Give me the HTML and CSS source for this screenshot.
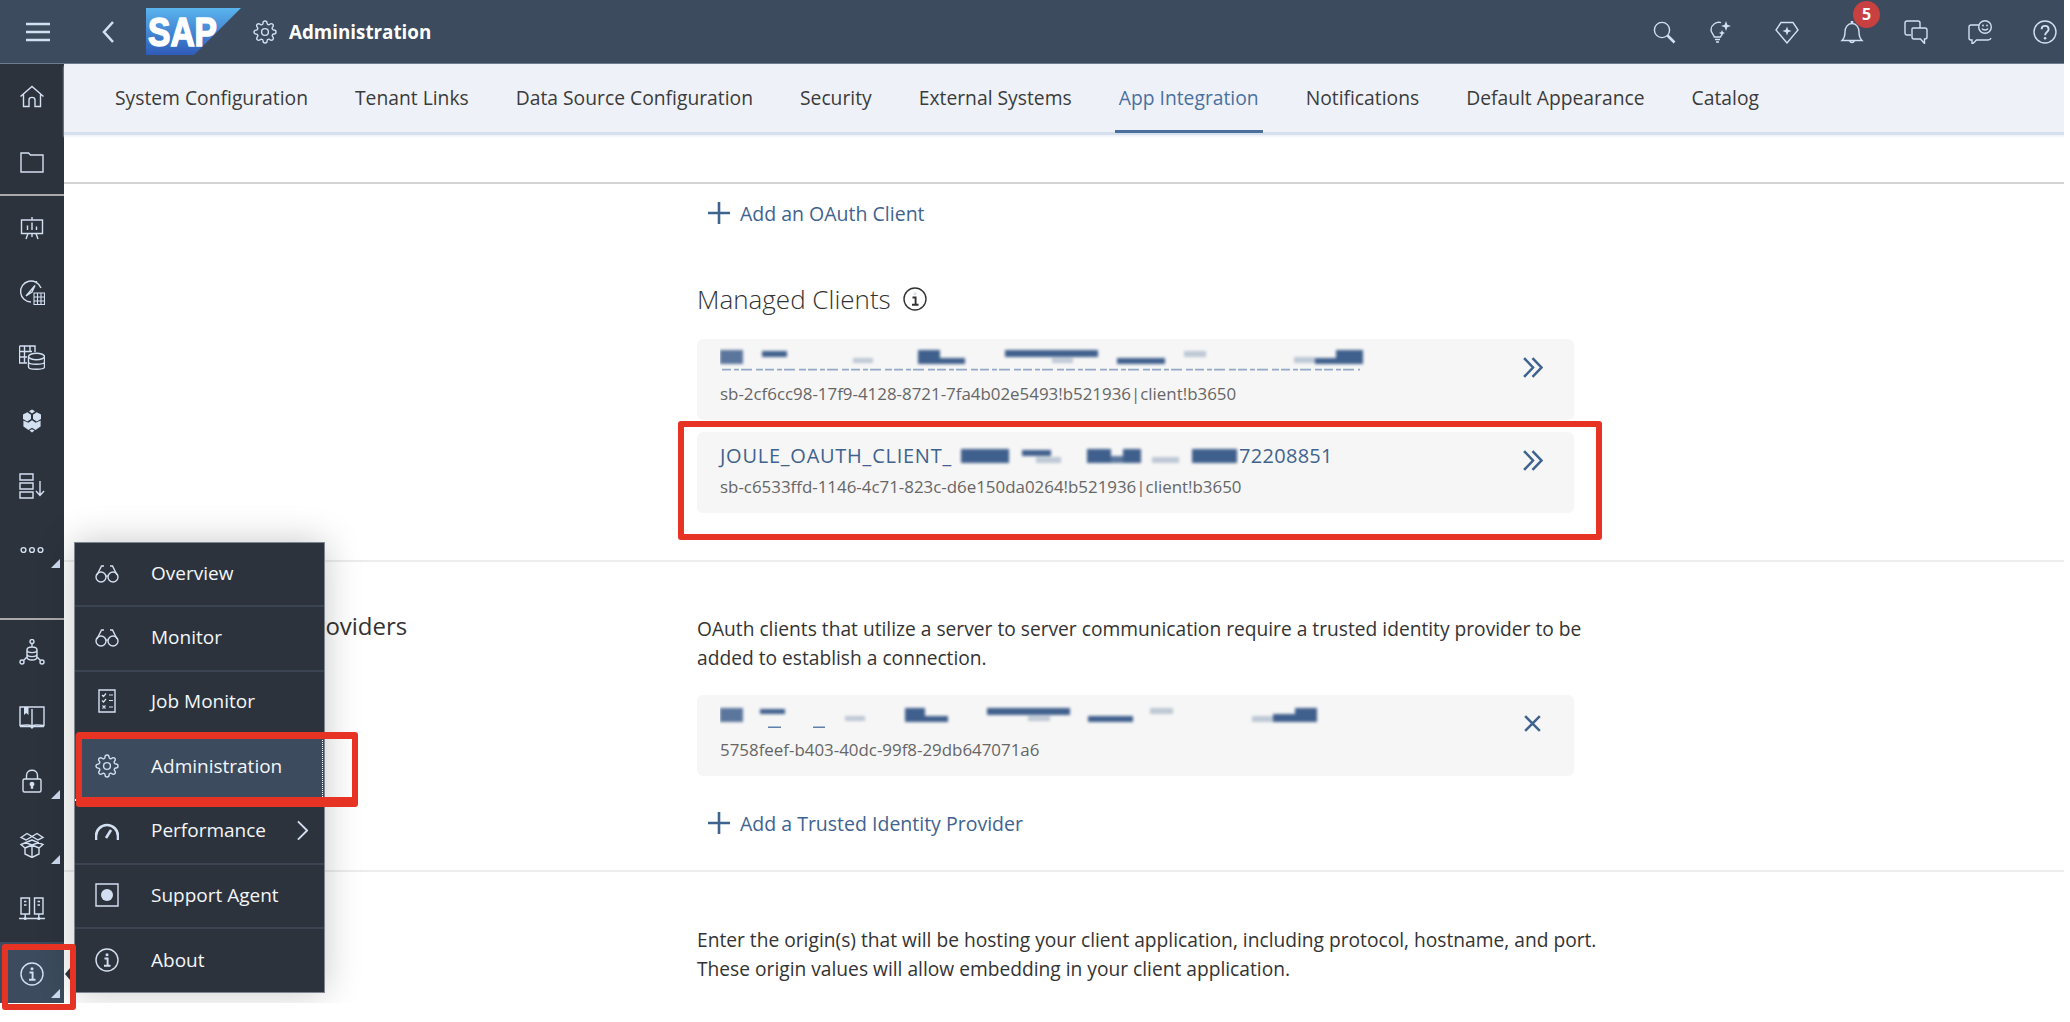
FILE: index.html
```html
<!DOCTYPE html>
<html lang="en">
<head>
    <meta charset="UTF-8">
    <title>Administration</title>
    <link rel="stylesheet" href="styles.css">
</head>
<body>
    <svg class="icon-defs" aria-hidden="true">
        <symbol id="i-gear" viewBox="0 0 24 24">
            <circle cx="12" cy="12" r="3.4"/>
            <path d="M19.4 15a1.65 1.65 0 0 0 .33 1.82l.06.06a2 2 0 0 1 0 2.83 2 2 0 0 1-2.83 0l-.06-.06a1.65 1.65 0 0 0-1.82-.33 1.65 1.65 0 0 0-1 1.51V21a2 2 0 0 1-2 2 2 2 0 0 1-2-2v-.09A1.65 1.65 0 0 0 9 19.4a1.65 1.65 0 0 0-1.82.33l-.06.06a2 2 0 0 1-2.83 0 2 2 0 0 1 0-2.83l.06-.06a1.65 1.65 0 0 0 .33-1.82 1.65 1.65 0 0 0-1.51-1H3a2 2 0 0 1-2-2 2 2 0 0 1 2-2h.09A1.65 1.65 0 0 0 4.6 9a1.65 1.65 0 0 0-.33-1.82l-.06-.06a2 2 0 0 1 0-2.83 2 2 0 0 1 2.83 0l.06.06a1.65 1.65 0 0 0 1.82.33H9a1.65 1.65 0 0 0 1-1.51V3a2 2 0 0 1 2-2 2 2 0 0 1 2 2v.09a1.65 1.65 0 0 0 1 1.51 1.65 1.65 0 0 0 1.82-.33l.06-.06a2 2 0 0 1 2.83 0 2 2 0 0 1 0 2.83l-.06.06a1.65 1.65 0 0 0-.33 1.82V9a1.65 1.65 0 0 0 1.51 1H21a2 2 0 0 1 2 2 2 2 0 0 1-2 2h-.09a1.65 1.65 0 0 0-1.51 1z"/>
        </symbol>
        <symbol id="i-info" viewBox="0 0 24 24">
            <circle cx="12" cy="12" r="11"/>
            <path d="M9.5 10.5H12.6V17.5M9 17.8H15.5" stroke-width="1.9"/>
            <circle class="fill" cx="12" cy="6.8" r="1.5"/>
        </symbol>
        <symbol id="i-glasses" viewBox="0 0 24 24">
            <circle cx="6" cy="16" r="5"/>
            <circle cx="18" cy="16" r="5"/>
            <path d="M11 15.5C11.6 14.6 12.4 14.6 13 15.5M2 14L6.5 5H9M22 14L17.5 5H15"/>
        </symbol>
    </svg>

    <div class="app">
        <header class="topbar">
            <svg class="ico menu-btn" viewBox="0 0 24 24"><path class="thick" d="M0 4H24M0 12H24M0 20H24"/></svg>
            <svg class="ico back-btn" viewBox="0 0 12 22"><path class="thick" d="M11 1L2 11L11 21"/></svg>
            <svg class="logo" viewBox="0 0 95 47">
                <defs>
                    <linearGradient id="sap-blue" x1="0" y1="0" x2="0" y2="1">
                        <stop offset="0" stop-color="#5ab4ee"/>
                        <stop offset="1" stop-color="#2f5bb9"/>
                    </linearGradient>
                </defs>
                <polygon points="0,0 95,0 48,47 0,47" fill="url(#sap-blue)"/>
                <text class="logo-text" x="2" y="38" textLength="69" lengthAdjust="spacingAndGlyphs">SAP</text>
            </svg>
            <svg class="ico page-ico"><use href="#i-gear"/></svg>
            <span class="page-title">Administration</span>

            <div class="actions">
                <svg class="ico act-search" viewBox="0 0 24 24"><circle cx="10" cy="10" r="7.6"/><path class="thick" d="M15.5 15.5L22.5 22.5"/></svg>
                <svg class="ico act-bulb" viewBox="0 0 24 24">
                    <path d="M13 2.6A8 8 0 0 0 3 9.5C3 13 5.6 14.3 6.3 17H12.5C12.8 16 13.3 15.2 14 14.4M7 19.5H12M8 22H11"/>
                    <path class="fill" d="M18 1L19.3 4.7L23 6L19.3 7.3L18 11L16.7 7.3L13 6L16.7 4.7ZM14 10L14.9 12.1L17 13L14.9 13.9L14 16L13.1 13.9L11 13L13.1 12.1Z"/>
                </svg>
                <svg class="ico act-gem" viewBox="0 0 24 24">
                    <path d="M6 2.5H18L23 10L12 23L1 10Z"/>
                    <path class="fill" d="M12 6.5L13.2 9.8L16.5 11L13.2 12.2L12 15.5L10.8 12.2L7.5 11L10.8 9.8Z"/>
                </svg>
                <div class="bell-wrap">
                    <svg class="ico" viewBox="0 0 24 24"><path d="M2 20.5C4.5 18 5 16 5 12C5 7.5 7.5 3.5 12 3.5C16.5 3.5 19 7.5 19 12C19 16 19.5 18 22 20.5ZM9.8 21C10.2 23 13.8 23 14.2 21"/><path class="thick" d="M12 1V3"/></svg>
                    <span class="badge">5</span>
                </div>
                <svg class="ico act-chat" viewBox="0 0 24 24"><path d="M7 15H3C1.8 15 1 14.2 1 13V3C1 1.8 1.8 1 3 1H14C15.2 1 16 1.8 16 3V8M9 8H21C22.2 8 23 8.8 23 10V17C23 18.2 22.2 19 21 19H20.5V23.5L16.5 19H10C8.8 19 8 18.2 8 17V9C8 8.5 8.5 8 9 8Z"/></svg>
                <svg class="ico act-feedback" viewBox="0 0 24 24">
                    <path d="M11 5H3C1.8 5 1 5.8 1 7V18C1 19.2 1.8 20 3 20H4V24.5L8.5 20H20C21.5 20 22.5 19.5 23 18"/>
                    <circle cx="17" cy="7" r="6.3"/>
                    <path d="M14 8.5C15 10.5 19 10.5 20 8.5"/>
                    <circle class="fill" cx="15" cy="5.5" r=".9"/>
                    <circle class="fill" cx="19" cy="5.5" r=".9"/>
                </svg>
                <svg class="ico act-help" viewBox="0 0 24 24"><circle cx="12" cy="12" r="11"/><path stroke-width="1.9" d="M8.6 9.2C8.6 4.8 15.6 4.8 15.6 9.2C15.6 12 12.1 12 12.1 15.2"/><circle class="fill" cx="12.1" cy="18.2" r="1.3"/></svg>
            </div>
        </header>

        <div class="body-row">
            <aside class="rail">
                <div class="rail-group">
                    <div class="rail-item"><svg class="ico" viewBox="0 0 24 24"><path d="M0.5 11.5L12 1.5L23.5 11.5M3.5 9.5V21.5H9V15C9 11.5 15 11.5 15 15V21.5H20.5V9.5"/></svg></div>
                    <div class="rail-item"><svg class="ico" viewBox="0 0 24 24"><path d="M1 3H8.5L10.5 5H23V22H1Z"/></svg></div>
                </div>
                <div class="rail-group rail-mid">
                    <div class="rail-item"><svg class="ico" viewBox="0 0 24 24"><path d="M1.5 4H22.5V17.5H1.5ZM12 1V4M8 17.5L6 23M16 17.5L18 23M12 17.5V21M7.5 14V9.5M12 14V6.5M16.5 14V10.5"/></svg></div>
                    <div class="rail-item"><svg class="ico ico-big" viewBox="0 0 26 26"><path d="M22 9A10.5 10.5 0 1 0 12 23M7 17L16 6.5L13 13ZM17.5 4.5V2"/><path d="M15 14H25.5V25.5H15ZM15 18H25.5M15 22H25.5M18.5 14V25.5M22 14V25.5" stroke-width="1.1"/></svg></div>
                    <div class="rail-item"><svg class="ico ico-big" viewBox="0 0 26 26"><path d="M0.5 2H16V8M0.5 2V19H8M0.5 7.5H13M0.5 13H8M5.5 2V19M11 2V8"/><ellipse cx="17.5" cy="12.5" rx="8" ry="3.2"/><path d="M9.5 12.5V23C9.5 26 25.5 26 25.5 23V12.5M9.5 18C9.5 21 25.5 21 25.5 18"/></svg></div>
                    <div class="rail-item"><svg class="ico" viewBox="0 0 24 24"><path class="fill" d="M12 .5L15 2.3L12 4.6L9 2.3ZM7.3 3.2L11 5.8V10L7.3 12.5L3 10V5.6ZM16.7 3.2L21 5.6V10L16.7 12.5L13 10V5.8ZM12 11.3L15.7 13.8L20.6 11.4V17.5L15.5 21L12 18.8L8.5 21L3.4 17.5V11.4L8.3 13.8ZM9.5 21.6L12 20.3L14.5 21.6L12 23.5Z"/></svg></div>
                    <div class="rail-item"><svg class="ico ico-big" viewBox="0 0 26 26"><path d="M1 1H14V7H1ZM1 10H14V16H1ZM1 19H14V25H1ZM21 8V22M17 18L21 22.5L25 18"/></svg></div>
                    <div class="rail-item has-sub"><svg class="ico" viewBox="0 0 24 24"><circle cx="3.5" cy="12" r="2.4"/><circle cx="12" cy="12" r="2.4"/><circle cx="20.5" cy="12" r="2.4"/></svg></div>
                </div>
                <div class="rail-group rail-low">
                    <div class="rail-item"><svg class="ico ico-big" viewBox="0 0 26 26"><circle cx="13" cy="2.5" r="2"/><path d="M13 4.5V8M8 11C8 7 18 7 18 11V18C18 22 8 22 8 18ZM8 11C8 14.5 18 14.5 18 11M8 15C8 18.5 18 18.5 18 15M8 18L4.5 21.5M18 18L21.5 21.5"/><circle cx="3" cy="23" r="2"/><circle cx="23" cy="23" r="2"/></svg></div>
                    <div class="rail-item"><svg class="ico ico-big" viewBox="0 0 26 26"><path d="M13 5V22C11 20.5 4 21 1 21.5V3H13C16 3 22 3 25 3V21.5C22 21 15 20.5 13 22M1 22.5H11.5L13 24L14.5 22.5H25"/><path class="fill" d="M5 3H9.5V11L7.2 9L5 11Z"/></svg></div>
                    <div class="rail-item has-sub"><svg class="ico" viewBox="0 0 24 24"><path d="M6.5 10V6.5C6.5 -.5 17.5 -.5 17.5 6.5V10M4.5 10H19.5C20.5 10 21 10.5 21 11.5V21.5C21 22.5 20.5 23 19.5 23H4.5C3.5 23 3 22.5 3 21.5V11.5C3 10.5 3.5 10 4.5 10Z"/><path class="fill" d="M12 12.8A2.4 2.4 0 0 1 13.2 17.3V19.8H10.8V17.3A2.4 2.4 0 0 1 12 12.8Z"/></svg></div>
                    <div class="rail-item has-sub"><svg class="ico ico-big" viewBox="0 0 26 26"><path d="M13 8L2 12.5V12.5L6 16V22L13 25.5L20 22V16L24 12.5L13 8ZM13 13V25.5M6 10.5L13 13L20 10.5M6 16L13 13M20 16L13 13M2 5.5L8 1.5L13 4.5L18 1.5L24 5.5L19 8L13 4.5L7 8Z"/></svg></div>
                    <div class="rail-item"><svg class="ico ico-big" viewBox="0 0 26 26"><path d="M2 1H10.5V17H2ZM15.5 1H24V17H15.5ZM0 21.5H26M6.2 17V21.5M19.8 17V21.5"/><circle class="fill" cx="6.2" cy="21.5" r="1.6"/><circle class="fill" cx="19.8" cy="21.5" r="1.6"/><path d="M5 4.5H7.5M18.5 4.5H21M5 8H7.5M18.5 8H21"/></svg></div>
                    <div class="rail-item has-sub current"><svg class="ico"><use href="#i-info"/></svg></div>
                </div>
            </aside>

            <div class="content">
                <nav class="tabs">
                    <a class="tab">System Configuration</a>
                    <a class="tab">Tenant Links</a>
                    <a class="tab">Data Source Configuration</a>
                    <a class="tab">Security</a>
                    <a class="tab">External Systems</a>
                    <a class="tab active">App Integration</a>
                    <a class="tab">Notifications</a>
                    <a class="tab">Default Appearance</a>
                    <a class="tab">Catalog</a>
                </nav>

                <main class="page">
                    <section class="sec sec-clients">
                        <div class="sec-side"></div>
                        <div class="sec-main">
                            <a class="add-row"><svg class="plus" viewBox="0 0 22 22"><path d="M11 0V22M0 11H22"/></svg>Add an OAuth Client</a>
                            <h3 class="sub-head">Managed Clients <svg class="ico head-info"><use href="#i-info"/></svg></h3>
                            <div class="card first-card">
                                <div class="card-text">
                                    <div class="card-title">
                                        <svg class="smudge" viewBox="720 346 650 32" width="650" height="32">
                                            <path class="leftover" d="M722 369.6H1360"/>
                                            <g class="blur">
                                                <rect class="soft" x="720" y="350" width="23" height="14"/>
                                                <rect x="762" y="351" width="25" height="6"/>
                                                <rect class="pale" x="853" y="358" width="20" height="5"/>
                                                <rect x="918" y="350" width="22" height="14"/>
                                                <rect x="940" y="358" width="25" height="6"/>
                                                <rect x="1005" y="350" width="93" height="7"/>
                                                <rect class="pale" x="1052" y="358" width="21" height="5"/>
                                                <rect x="1117" y="358" width="48" height="6"/>
                                                <rect class="pale" x="1184" y="351" width="22" height="6"/>
                                                <rect class="pale" x="1294" y="357" width="21" height="6"/>
                                                <rect x="1315" y="358" width="21" height="6"/>
                                                <rect x="1336" y="350" width="27" height="14"/>
                                            </g>
                                        </svg>
                                    </div>
                                    <div class="card-sub">sb-2cf6cc98-17f9-4128-8721-7fa4b02e5493!b521936|client!b3650</div>
                                </div>
                                <svg class="card-act" viewBox="0 0 20 20"><path d="M2 1L10.5 10L2 19M10 1L18.5 10L10 19"/></svg>
                            </div>
                            <div class="card">
                                <div class="card-text">
                                    <div class="card-title">
                                        <span class="title-part caps">JOULE_OAUTH_CLIENT_</span>
                                        <svg class="smudge" viewBox="953 439 287 32" width="287" height="32">
                                            <g class="blur">
                                                <rect x="962" y="449" width="48" height="14"/>
                                                <rect x="1023" y="450" width="29" height="6"/>
                                                <rect class="pale" x="1037" y="457" width="25" height="6"/>
                                                <rect x="1088" y="449" width="24" height="14"/>
                                                <rect class="soft" x="1112" y="456" width="12" height="7"/>
                                                <rect x="1124" y="449" width="18" height="14"/>
                                                <rect class="pale" x="1153" y="457" width="27" height="6"/>
                                                <rect x="1193" y="449" width="45" height="14"/>
                                            </g>
                                        </svg>
                                        <span class="title-part digits">72208851</span>
                                    </div>
                                    <div class="card-sub">sb-c6533ffd-1146-4c71-823c-d6e150da0264!b521936|client!b3650</div>
                                </div>
                                <svg class="card-act" viewBox="0 0 20 20"><path d="M2 1L10.5 10L2 19M10 1L18.5 10L10 19"/></svg>
                            </div>
                        </div>
                    </section>

                    <section class="sec sec-idp">
                        <div class="sec-side"><h2 class="side-head">Trusted Identity Providers</h2></div>
                        <div class="sec-main">
                            <p class="para">OAuth clients that utilize a server to server communication require a trusted identity provider to be added to establish a connection.</p>
                            <div class="card idp-card">
                                <div class="card-text">
                                    <div class="card-title">
                                        <svg class="smudge" viewBox="720 703 650 32" width="650" height="32">
                                            <path class="leftover" d="M768 728.3H781M813 728.3H825"/>
                                            <g class="blur">
                                                <rect class="soft" x="720" y="709" width="23" height="14"/>
                                                <rect x="760" y="710" width="25" height="5"/>
                                                <rect class="pale" x="845" y="717" width="20" height="5"/>
                                                <rect x="905" y="709" width="20" height="14"/>
                                                <rect x="925" y="717" width="23" height="6"/>
                                                <rect x="987" y="709" width="83" height="7"/>
                                                <rect class="pale" x="1028" y="717" width="22" height="5"/>
                                                <rect x="1088" y="717" width="45" height="6"/>
                                                <rect class="pale" x="1150" y="709" width="23" height="6"/>
                                                <rect class="pale" x="1252" y="717" width="21" height="6"/>
                                                <rect x="1273" y="715" width="22" height="8"/>
                                                <rect x="1295" y="709" width="22" height="14"/>
                                            </g>
                                        </svg>
                                    </div>
                                    <div class="card-sub">5758feef-b403-40dc-99f8-29db647071a6</div>
                                </div>
                                <svg class="card-act close" viewBox="0 0 20 20"><path d="M3 3L17 17M17 3L3 17"/></svg>
                            </div>
                            <a class="add-row add-idp"><svg class="plus" viewBox="0 0 22 22"><path d="M11 0V22M0 11H22"/></svg>Add a Trusted Identity Provider</a>
                        </div>
                    </section>

                    <section class="sec sec-origins">
                        <div class="sec-side"></div>
                        <div class="sec-main">
                            <p class="para">Enter the origin(s) that will be hosting your client application, including protocol, hostname, and port.<br>These origin values will allow embedding in your client application.</p>
                        </div>
                    </section>
                </main>
            </div>
        </div>

        <!-- menu que sale del icono de info -->
        <ul class="pop-menu">
            <li class="pop-item"><svg class="ico"><use href="#i-glasses"/></svg>Overview</li>
            <li class="pop-item"><svg class="ico"><use href="#i-glasses"/></svg>Monitor</li>
            <li class="pop-item"><svg class="ico" viewBox="0 0 24 24"><path d="M4 1H20V23H4Z"/><path stroke-width="1.2" d="M7 6L8.5 7.5L11 4.5M14 6H18M7 11.5L8.5 13L11 10M14 11.5H18M7.5 16.5L10.5 19.5M10.5 16.5L7.5 19.5M14 18H18"/></svg>Job Monitor</li>
            <li class="pop-item selected"><svg class="ico"><use href="#i-gear"/></svg>Administration</li>
            <li class="pop-item"><svg class="ico" viewBox="0 0 24 24"><path class="thick" d="M1 22V18A11 11 0 0 1 23 18V22"/><path class="thick" d="M11 20L16 12"/></svg>Performance<svg class="pop-chevron" viewBox="0 0 12 22"><path d="M1 1L11 11L1 21"/></svg></li>
            <li class="pop-item"><svg class="ico" viewBox="0 0 24 24"><path d="M1 1H23V23H1Z"/><circle class="fill" cx="12" cy="12" r="6"/></svg>Support Agent</li>
            <li class="pop-item"><svg class="ico"><use href="#i-info"/></svg>About</li>
        </ul>
        <span class="pop-arrow"></span>
    </div>

    <!-- recuadros rojos de la captura -->
    <div class="mark mark-client"></div>
    <div class="mark mark-admin"></div>
    <div class="mark mark-info"></div>
</body>
</html>
```

FILE: styles.css
```css
/* Estilos generales */
* {
    box-sizing: border-box;
    margin: 0;
    padding: 0;
}

body {
    font-family: "Open Sans", Arial, sans-serif;
    background-color: #fff;
    color: #333;
    overflow: hidden;
    height: 1022px;
    position: relative;
}

.icon-defs {
    position: absolute;
    width: 0;
    height: 0;
}

.ico {
    width: 24px;
    height: 24px;
    flex: none;
    fill: none;
    stroke: #d3e0f2;
    stroke-width: 1.4;
}

.ico .fill,
.fill {
    fill: #d3e0f2;
    stroke: none;
}

.thick {
    stroke-width: 2.6;
}

.ico-big {
    width: 26px;
    height: 26px;
}

.app {
    width: 2064px;
    height: 1003px;
    position: relative;
    overflow: hidden;
    background-color: #fff;
}

/* Barra superior */
.topbar {
    height: 64px;
    background-color: #3c4b5d;
    border-bottom: 1px solid #6d7b8c;
    display: flex;
    align-items: center;
    padding-left: 26px;
}

.back-btn {
    width: 12px;
    margin-left: 52px;
}

.logo {
    width: 95px;
    height: 47px;
    margin-left: 32px;
    flex: none;
}

.logo-text {
    font-family: "Liberation Sans", Arial, sans-serif;
    font-size: 40px;
    font-weight: bold;
    fill: #fff;
    stroke: #fff;
    stroke-width: 1.6;
}

.page-ico {
    margin-left: 12px;
}

.page-title {
    margin-left: 12px;
    font-size: 18.8px;
    font-weight: 700;
    color: #fff;
}

.actions {
    margin-left: auto;
    padding-right: 7px;
    display: flex;
    align-items: center;
}

.act-bulb { margin-left: 32px; }
.act-gem { margin-left: 43px; }
.bell-wrap { margin-left: 41px; position: relative; height: 24px; }
.act-chat { margin-left: 40px; }
.act-feedback { margin-left: 40px; }
.act-help { margin-left: 41px; }

.badge {
    position: absolute;
    top: -19px;
    left: 13px;
    width: 27px;
    height: 27px;
    border-radius: 50%;
    background-color: #c8403f;
    color: #fff;
    font-size: 16px;
    font-weight: 700;
    line-height: 27px;
    text-align: center;
}

/* Columna lateral */
.body-row {
    display: flex;
    height: 939px;
}

.rail {
    width: 64px;
    flex: none;
    padding-top: 1px;
    background-color: #2c333d;
    overflow: hidden;
}

.rail-group {
    display: flex;
    flex-direction: column;
}

.rail-item {
    height: 64.4px;
    flex: none;
    display: flex;
    align-items: center;
    justify-content: center;
    position: relative;
}

.rail-mid {
    border-top: 2px solid #a9a9a9;
}

.rail-low {
    border-top: 2px solid #a9a9a9;
    margin-top: 36px;
}

.has-sub::after {
    content: "";
    position: absolute;
    right: 4px;
    bottom: 14px;
    border-left: 9px solid transparent;
    border-bottom: 9px solid #cfdcf0;
}

.current {
    background-color: #3c4b5d;
}

.current.has-sub::after {
    bottom: 8px;
}

/* Pestañas */
.content {
    flex: 1;
    display: flex;
    flex-direction: column;
    min-width: 0;
}

.tabs {
    height: 71px;
    flex: none;
    background-color: #eef2f8;
    border-bottom: 3px solid #d5e0ee;
    box-shadow: 0 2px 2px #eef3f8;
    display: flex;
    gap: 39px;
    padding-left: 47px;
}

.tab {
    height: 69px;
    padding: 0 4px;
    font-size: 19.3px;
    line-height: 68px;
    color: #3b3b3b;
    white-space: nowrap;
}

.tab.active {
    color: #4a709e;
    border-bottom: 3px solid #4a6f9b;
}

/* Contenido */
.page {
    flex: 1;
    padding-top: 47px;
    overflow: hidden;
}

.sec {
    display: grid;
    grid-template-columns: 633px 1000px;
    border-top: 2px solid #ececec;
}

.sec-clients {
    border-top-color: #d4d4d4;
    padding: 13px 0 47px;
}

.sec-idp {
    padding: 52px 0 31px;
}

.sec-origins {
    padding-top: 53px;
}

.side-head {
    font-size: 24px;
    font-weight: 400;
    line-height: 32px;
    margin-top: -4px;
    padding-left: 54px;
    white-space: nowrap;
}

.add-row {
    height: 32px;
    display: flex;
    align-items: center;
    padding-left: 11px;
    font-size: 19.5px;
    color: #3f638f;
}

.add-idp {
    margin-top: 31px;
}

.plus {
    width: 22px;
    height: 22px;
    margin-right: 10px;
    fill: none;
    stroke: #3f638f;
    stroke-width: 2.6;
}

.sub-head {
    display: flex;
    align-items: center;
    gap: 12px;
    margin: 54px 0 24px;
    font-size: 26px;
    font-weight: 300;
    line-height: 32px;
}

.head-info {
    stroke: #333;
}

.head-info .fill {
    fill: #333;
}

.card {
    width: 877px;
    height: 81px;
    margin-top: 12px;
    padding: 7px 31px 0 23px;
    background-color: #f6f6f6;
    border-radius: 6px;
    display: flex;
    justify-content: space-between;
}

.first-card {
    margin-top: 0;
}

.idp-card {
    margin-top: 23px;
}

.card-title {
    height: 32px;
    display: flex;
    align-items: center;
    font-size: 20px;
    color: #3f638f;
    white-space: nowrap;
}

.title-part {
    flex: none;
}

.caps {
    letter-spacing: .75px;
}

.digits {
    letter-spacing: .3px;
}

.card-sub {
    font-size: 16.9px;
    line-height: 32px;
    color: #666;
    white-space: nowrap;
}

.card-act {
    width: 21px;
    height: 21px;
    margin-top: 11px;
    flex: none;
    fill: none;
    stroke: #3f638f;
    stroke-width: 2.4;
}

.smudge {
    flex: none;
    display: block;
}

.smudge .blur {
    filter: blur(1.6px);
}

.smudge rect {
    fill: #3f5f8c;
}

.smudge .soft {
    opacity: .85;
}

.smudge .pale {
    opacity: .3;
}

.leftover {
    stroke: #5f80ab;
    stroke-width: 1.6;
    stroke-dasharray: 9 3 5 2 11 4 7 2;
    opacity: .65;
    fill: none;
}

.idp-card .leftover {
    stroke-dasharray: none;
    opacity: 1;
}

.para {
    max-width: 915px;
    font-size: 19.2px;
    line-height: 29px;
    color: #333;
}

/* Menu desplegable */
.pop-menu {
    position: absolute;
    left: 74px;
    top: 542px;
    width: 251px;
    height: 451px;
    list-style: none;
    background-color: #2c333d;
    border: 1px solid #7d8590;
    box-shadow: 0 0 34px rgba(0, 0, 0, .22);
}

.pop-item {
    height: 64.4px;
    display: flex;
    align-items: center;
    gap: 32px;
    padding: 0 0 3px 20px;
    font-size: 19px;
    color: #f3f6fa;
    border-bottom: 2px solid #3a4452;
    position: relative;
}

.pop-item:last-child {
    border-bottom: none;
}

.selected {
    background-color: #3c4b5d;
    border-bottom: 2px dotted #fff;
}

.selected::after {
    content: "";
    position: absolute;
    top: 0;
    bottom: 0;
    right: 1px;
    border-right: 1px dotted #fff;
}

.pop-chevron {
    position: absolute;
    left: 222px;
    top: 19px;
    width: 11px;
    height: 21px;
    fill: none;
    stroke: #d3e0f2;
    stroke-width: 2;
}

.pop-arrow {
    position: absolute;
    left: 65px;
    top: 968px;
    border-right: 5px solid #2c333d;
    border-top: 6px solid transparent;
    border-bottom: 6px solid transparent;
}

/* Recuadros rojos */
.mark {
    position: absolute;
    border: 6px solid #e63323;
    border-radius: 3px;
}

.mark-client {
    left: 678px;
    top: 421px;
    width: 924px;
    height: 119px;
}

.mark-admin {
    left: 76px;
    top: 732px;
    width: 282px;
    height: 75px;
    border-top-width: 7px;
    border-bottom-width: 10px;
}

.mark-info {
    left: 2px;
    top: 944px;
    width: 74px;
    height: 66px;
}
```
